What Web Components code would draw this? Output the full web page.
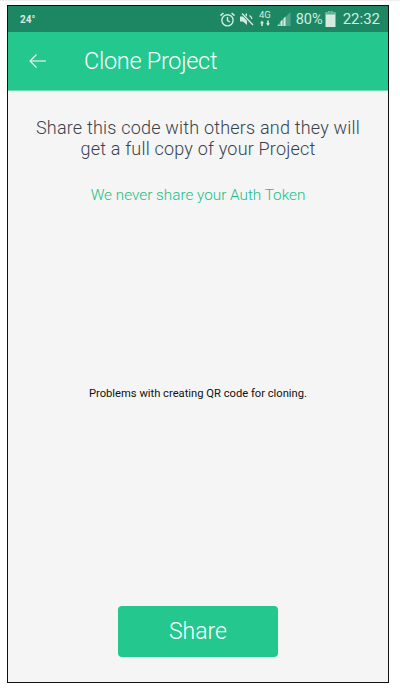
<!DOCTYPE html>
<html>
<head>
<meta charset="utf-8">
<title>Clone Project</title>
<style>
  html, body { margin: 0; height: 100%; background: #fff; }
  body { font-family: Roboto, "Open Sans", sans-serif; box-sizing: border-box; border-top: 1px solid #eee; }
</style>
</head>
<body>
<phone-frame>
  <status-bar slot="top"></status-bar>
  <app-header slot="top" title="Clone Project"></app-header>
  <clone-panel>
    <span slot="intro">Share this code with others and they will<br>get a full copy of your Project</span>
    <span slot="note">We never share your Auth Token</span>
    <span slot="message">Problems with creating QR code for cloning.</span>
    <share-button slot="action">Share</share-button>
  </clone-panel>
</phone-frame>

<script>
class PhoneFrame extends HTMLElement {
  constructor() {
    super();
    this.attachShadow({ mode: "open" });
  }

  connectedCallback() {
    this.shadowRoot.innerHTML = `
    <style>
      :host {
        display: flex;
        flex-direction: column;
        box-sizing: border-box;
        width: 382px;
        height: 678px;
        margin: 4px 0 0 7px;
        border: 1px solid #111;
        background: #f5f5f5;
      }
    </style>
    <slot name="top"></slot>
    <slot></slot>`;
  }
}

class StatusBar extends HTMLElement {
  constructor() {
    super();
    this.attachShadow({ mode: "open" });
  }

  connectedCallback() {
    this.shadowRoot.innerHTML = `
    <style>
      :host {
        display: flex;
        align-items: center;
        height: 26px;
        padding: 0 8px 0 12px;
        box-sizing: border-box;
        background: #1c8762;
        color: #d5ebe2;
        font-family: Roboto, sans-serif;
      }
      .temp { font-size: 10px; font-weight: 700; flex: 1; }
      .icons { display: flex; align-items: center; }
      svg { display: block; }
      .pct { font-size: 14.500px; margin-left: 5px; }
      .time { font-size: 15px; margin-left: 7px; }
    </style>
    <span class="temp">24&deg;</span>
    <div class="icons">
      <svg width="17" height="17" viewBox="0 0 17 17" fill="none" stroke="#d5ebe2" stroke-width="1.4">
        <circle cx="8.5" cy="9.3" r="5.6"/>
        <path d="M8.5 6v3.6l2.4 1.4"/>
        <path d="M1.5 4.6 4.4 2M15.5 4.6 12.6 2" stroke-width="1.6"/>
      </svg>
      <svg style="margin-left:3px" width="16" height="16" viewBox="0 0 16 16">
        <path d="M1 5.6h3L8 2v12l-4-3.6H1z" fill="#d5ebe2"/>
        <path d="M3 2.5 14 14" stroke="#1c8762" stroke-width="2.6"/>
        <path d="M3 2.5 14 14" stroke="#d5ebe2" stroke-width="1.3"/>
        <path d="M10.500 4.500c1.600 1 2.400 2.200 2.400 3.500" fill="none" stroke="#d5ebe2" stroke-width="1.2"/>
      </svg>
      <svg style="margin-left:4px" width="13" height="18" viewBox="0 0 13 18" fill="#d5ebe2">
        <text x="0" y="8" font-size="9.500" font-family="Roboto, sans-serif">4G</text>
        <path d="M3 10.500 5 13.200H3.800V16H2.200V13.200H1zM9 16 7 13.300H8.200V10.500H9.800V13.300H11z"/>
      </svg>
      <svg style="margin-left:4px" width="15" height="14" viewBox="0 0 14 14">
        <path d="M0 14 14 0v14z" fill="#4fa587"/>
        <path d="M1 14l2-2v2zM4 14v-4.500l2-2V14zM7 14V6.500L9 4.500V14z" fill="#d5ebe2"/>
      </svg>
      <span class="pct">80%</span>
      <svg style="margin-left:2px" width="11" height="16" viewBox="0 0 10 16">
        <path d="M3 0h4v1.500h3V16H0V1.500h3z" fill="#d5ebe2"/>
        <path d="M3 0h4v1.500h3V3.500H0V1.500h3z" fill="#5fae92"/>
      </svg>
      <span class="time">22:32</span>
    </div>`;
  }
}

class AppHeader extends HTMLElement {
  constructor() {
    super();
    this.attachShadow({ mode: "open" });
  }

  connectedCallback() {
    const title = this.getAttribute("title") || "";
    this.shadowRoot.innerHTML = `
    <style>
      :host {
        display: flex;
        align-items: center;
        height: 59px;
        flex: none;
        padding-left: 21px;
        box-sizing: border-box;
        background: #24c78e;
        border-bottom: 1px solid #6fdcb6;
        color: #fff;
      }
      svg { display: block; }
      h1 { margin: -1px 0 0 38px; font-size: 23.500px; letter-spacing: -0.3px; font-weight: 300; line-height: 30px; }
    </style>
    <svg width="17" height="14" viewBox="0 0 17 14" fill="none" stroke="#fff" stroke-width="1.1">
      <path d="M17 7H1M7.500 .5 1 7l6.500 6.500"/>
    </svg>
    <h1>${title}</h1>`;
  }
}

class ClonePanel extends HTMLElement {
  constructor() {
    super();
    this.attachShadow({ mode: "open" });
  }

  connectedCallback() {
    this.shadowRoot.innerHTML = `
    <style>
      :host {
        display: flex;
        flex-direction: column;
        align-items: center;
        flex: 1;
        text-align: center;
      }
      .intro {
        margin-top: 25.500px;
        font-size: 18px;
        letter-spacing: 0.2px;
        font-weight: 300;
        line-height: 21.200px;
        color: #37424d;
      }
      .note {
        margin-top: 26px;
        font-size: 15.300px;
        font-weight: 300;
        line-height: 20px;
        color: #18c085;
      }
      .message {
        margin-top: 181px;
        font-size: 11.200px;
        line-height: 16px;
        color: #111;
      }
      .action { margin-top: auto; margin-bottom: 25px; }
    </style>
    <div class="intro"><slot name="intro"></slot></div>
    <div class="note"><slot name="note"></slot></div>
    <div class="message"><slot name="message"></slot></div>
    <div class="action"><slot name="action"></slot></div>`;
  }
}

class ShareButton extends HTMLElement {
  constructor() {
    super();
    this.attachShadow({ mode: "open" });
  }

  connectedCallback() {
    this.shadowRoot.innerHTML = `
    <style>
      :host { display: block; }
      button {
        display: block;
        width: 160px;
        height: 51px;
        border: none;
        border-radius: 4px;
        background: #24c78e;
        color: #fff;
        font-family: inherit;
        font-size: 23px;
        font-weight: 300;
        padding: 0;
      }
    </style>
    <button><slot></slot></button>`;
  }
}

customElements.define("phone-frame", PhoneFrame);
customElements.define("status-bar", StatusBar);
customElements.define("app-header", AppHeader);
customElements.define("clone-panel", ClonePanel);
customElements.define("share-button", ShareButton);
</script>
</body>
</html>
